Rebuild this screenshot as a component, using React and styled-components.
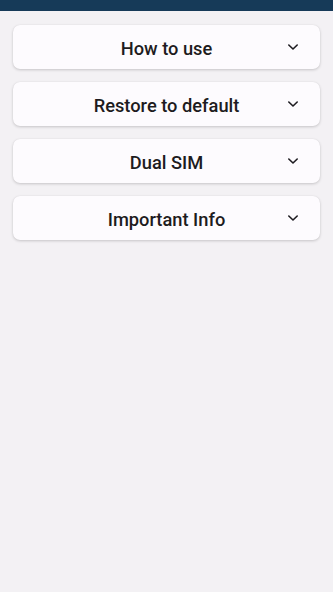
import React from "react";
import styled, { createGlobalStyle } from "styled-components";

const Global = createGlobalStyle`
  html, body { margin: 0; padding: 0; }
  body {
    background: #f3f1f4;
    font-family: Roboto, "Noto Sans", sans-serif;
    width: 333px;
    height: 592px;
    overflow: hidden;
  }
`;

const Page = styled.div`
  min-height: 592px;
  background: #f3f1f4;
  display: flex;
  flex-direction: column;
`;

const TopBar = styled.div`
  height: 11px;
  background: #163a58;
`;

const List = styled.div`
  display: flex;
  flex-direction: column;
  gap: 13px;
  padding: 14px 13px 0 13px;
`;

const Card = styled.div`
  height: 44px;
  background: #fdfbfe;
  border-radius: 7px;
  box-shadow: 0 1px 3px rgba(0, 0, 0, 0.18), 0 0 1px rgba(0, 0, 0, 0.08);
  display: grid;
  grid-template-columns: 1fr auto;
  align-items: center;
`;

const Title = styled.span`
  grid-column: 1 / 3;
  grid-row: 1;
  text-align: center;
  font-size: 18.3px;
  font-weight: 500;
  color: #1d1b20;
  padding-top: 2px;
`;

const Chevron = styled.svg`
  grid-column: 2;
  grid-row: 1;
  width: 12px;
  height: 8px;
  margin-right: 21px;
  margin-top: -1px;
`;

const items = ["How to use", "Restore to default", "Dual SIM", "Important Info"];

export default function App() {
  return (
    <Page>
      <Global />
      <TopBar />
      <List>
        {items.map((t) => (
          <Card key={t}>
            <Title>{t}</Title>
            <Chevron viewBox="0 0 12 8">
              <polyline
                points="1.8,2 6,6 10.2,2"
                fill="none"
                stroke="#1d1b20"
                strokeWidth="1.6"
                strokeLinecap="round"
                strokeLinejoin="round"
              />
            </Chevron>
          </Card>
        ))}
      </List>
    </Page>
  );
}
